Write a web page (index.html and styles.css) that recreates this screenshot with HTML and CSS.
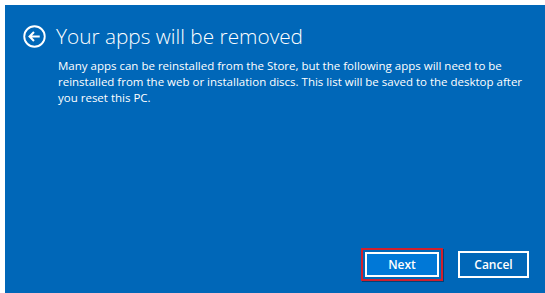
FILE: index.html
```html
<!DOCTYPE html>
<html lang="en">
<head>
    <meta charset="UTF-8">
    <title>Your apps will be removed</title>
    <link rel="stylesheet" href="styles.css">
</head>
<body>
    <div class="panel">
        <div class="header">
            <svg class="back-icon" width="23" height="23" viewBox="0 0 22 22">
                <circle cx="11" cy="11" r="9.8" fill="none" stroke="#fff" stroke-width="1.8"/>
                <path d="M16 11H6.5M10.5 6.8L6.3 11l4.2 4.2" fill="none" stroke="#fff" stroke-width="2"/>
            </svg>
            <h1 class="title">Your apps will be removed</h1>
        </div>
        <p class="message">Many apps can be reinstalled from the Store, but the following apps will need to be reinstalled from the web or installation discs. This list will be saved to the desktop after you reset this PC.</p>
        <div class="actions">
            <div class="focus-ring">
                <button class="btn btn-primary">Next</button>
            </div>
            <button class="btn">Cancel</button>
        </div>
    </div>
</body>
</html>
```

FILE: styles.css
```css
* {
    margin: 0;
    padding: 0;
    box-sizing: border-box;
}

body {
    background: #fff;
    font-family: 'Open Sans', 'Noto Sans', sans-serif;
    color: #fff;
    padding: 5px 0 0 5px;
    height: 293px;
    overflow: hidden;
}

.panel {
    background: #0067b8;
    height: 288px;
    padding: 17px 0 0 18px;
    display: flex;
    flex-direction: column;
}

.header {
    display: flex;
    align-items: center;
    gap: 10px;
}

.title {
    font-size: 20.8px;
    font-weight: 300;
    line-height: 28px;
}

.message {
    font-size: 11.5px;
    line-height: 16px;
    margin: 8px 8px 0 35px;
}

.actions {
    margin-top: auto;
    margin-bottom: 12px;
    display: flex;
    align-items: center;
    justify-content: flex-end;
    padding-right: 16px;
    gap: 15px;
}

.focus-ring {
    border: 2px solid #d0202e;
    padding: 2px;
    box-shadow: 1px 1px 0 rgba(0, 0, 0, 0.35);
}

.btn {
    font-family: inherit;
    font-size: 12px;
    font-weight: 600;
    color: #fff;
    background: transparent;
    border: 2px solid #fff;
    width: 71px;
    height: 27px;
}

.btn-primary {
    background: #0078d7;
    width: 74px;
    height: 25px;
}
```
